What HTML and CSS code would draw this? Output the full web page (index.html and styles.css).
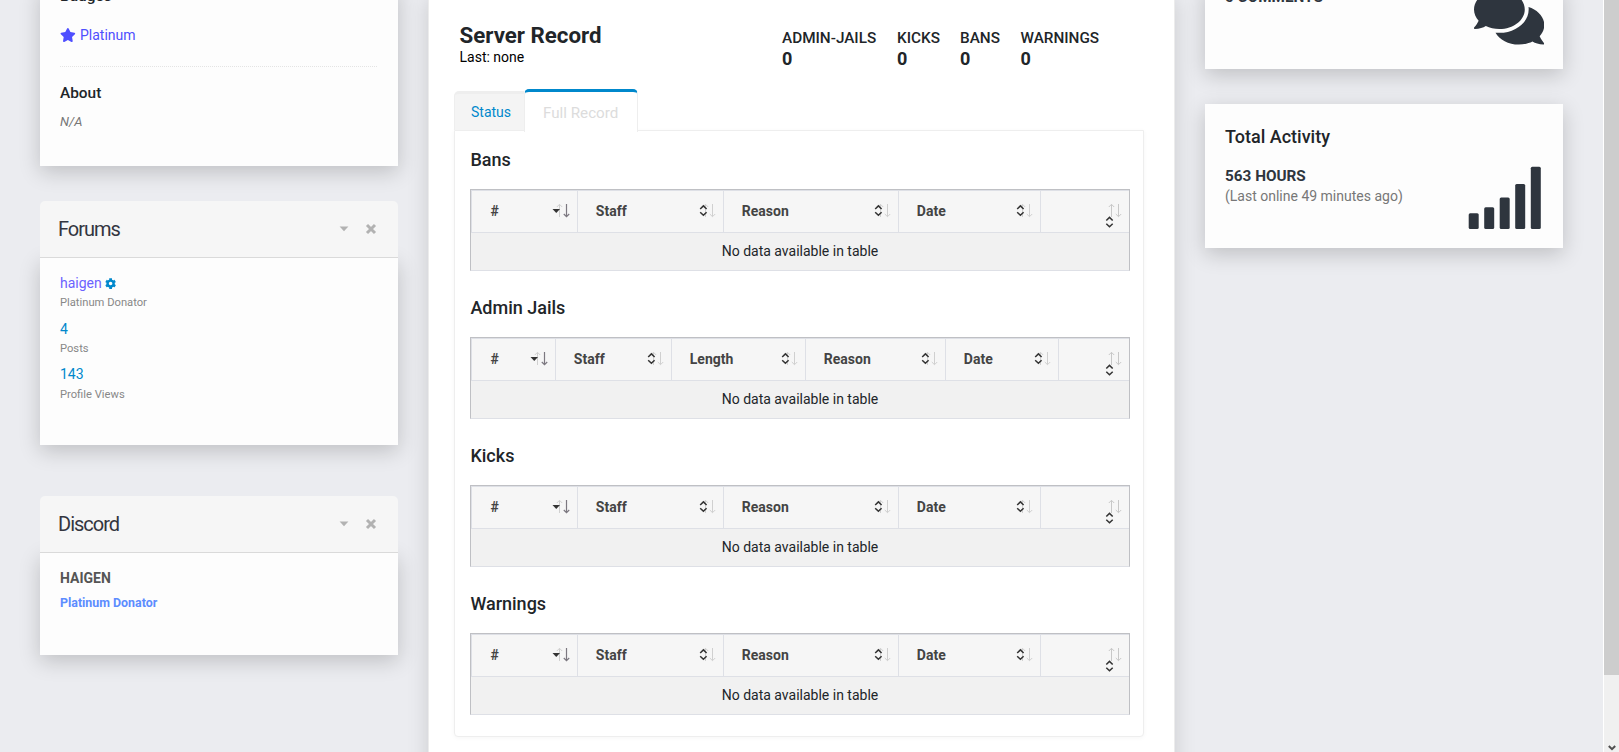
FILE: index.html
```
<!DOCTYPE html>
<html lang="en">
<head>
<meta charset="utf-8">
<title>User Profile</title>
<link rel="stylesheet" href="styles.css">
</head>
<body>
<svg class="defs" width="0" height="0">
  <symbol id="unsorted" viewBox="0 0 30 42">
    <path d="M12.500 14.500V27M9.800 17L12.500 14.300L15.200 17" fill="none" stroke="#d0d0d0"/>
    <path d="M19.500 14V26.500M16.800 24L19.500 26.700L22.200 24" fill="none" stroke="#d0d0d0"/>
    <path d="M7.200 19L10.400 15.900L13.600 19M7.200 22.200L10.400 25.300L13.600 22.200" fill="none" stroke="#333" stroke-width="1.500"/>
  </symbol>
  <symbol id="unsorted-wrapped" viewBox="0 0 30 42">
    <path d="M12.500 14.500V27M9.800 17L12.500 14.300L15.200 17" fill="none" stroke="#c8c8c8"/>
    <path d="M19.500 14V26.500M16.800 24L19.500 26.700L22.200 24" fill="none" stroke="#c8c8c8"/>
    <path d="M7.300 30.500L10.500 27.400L13.700 30.500M7.300 33.700L10.500 36.800L13.700 33.700" fill="none" stroke="#333" stroke-width="1.500"/>
  </symbol>
  <symbol id="sorted" viewBox="0 0 30 42">
    <path d="M12.500 14.500V27M9.800 17L12.500 14.300L15.200 17" fill="none" stroke="#d0d0d0"/>
    <path d="M19.500 14V26.500M16.800 24L19.500 26.700L22.200 24" fill="none" stroke="#7c7880" stroke-width="1.200"/>
    <path d="M5.500 19H13L9.250 23Z" fill="#333"/>
  </symbol>
  <symbol id="caret" viewBox="0 0 10 6"><path d="M.6.5H9.400L5 5.200Z" fill="#b2b2b2"/></symbol>
  <symbol id="close" viewBox="0 0 12 12"><path d="M2 2L10 10M10 2L2 10" stroke="#b2b2b2" stroke-width="3"/></symbol>
</svg>

<div class="page">
  <aside class="left">
    <section class="card profile">
      <h4 class="label">Badges</h4>
      <p class="badge">
        <svg class="star" viewBox="0 0 576 512"><path fill="currentColor" d="M259.300 17.800L194 150.200 47.900 171.500c-26.200 3.800-36.700 36.100-17.700 54.600l105.700 103-25 145.500c-4.500 26.300 23.200 46 46.400 33.700L288 439.600l130.700 68.700c23.200 12.200 50.900-7.400 46.400-33.700l-25-145.500 105.700-103c19-18.500 8.500-50.800-17.700-54.600L382 150.200 316.700 17.800c-11.700-23.600-45.600-23.900-57.400 0z"/></svg>
        <span>Platinum</span>
      </p>
      <hr class="dotted">
      <h4 class="label">About</h4>
      <p class="bio">N/A</p>
    </section>

    <section class="panel forums">
      <header class="panel-head">
        <h2>Forums</h2>
        <svg class="caret"><use href="#caret"/></svg>
        <svg class="close"><use href="#close"/></svg>
      </header>
      <div class="card panel-body stats">
        <p class="stat user">haigen
          <svg class="cog" viewBox="0 0 512 512"><path fill="#0088cc" d="M487.400 315.700l-42.600-24.600c4.300-23.200 4.300-47 0-70.200l42.600-24.600c4.900-2.800 7.100-8.600 5.500-14-11.100-35.600-30-67.800-54.700-94.600-3.800-4.100-10-5.100-14.800-2.300L380.800 110c-17.900-15.400-38.500-27.300-60.800-35.100V25.800c0-5.600-3.900-10.500-9.400-11.700-36.700-8.200-74.300-7.800-109.200 0-5.500 1.200-9.400 6.100-9.400 11.700V75c-22.200 7.900-42.800 19.800-60.800 35.100L88.700 85.500c-4.900-2.800-11-1.900-14.800 2.300-24.700 26.700-43.600 58.900-54.700 94.600-1.700 5.400.6 11.200 5.500 14L67.300 221c-4.300 23.200-4.300 47 0 70.200l-42.600 24.600c-4.900 2.800-7.100 8.600-5.500 14 11.100 35.600 30 67.800 54.700 94.600 3.800 4.100 10 5.100 14.800 2.300l42.600-24.600c17.900 15.400 38.500 27.300 60.800 35.100v49.200c0 5.600 3.900 10.500 9.400 11.700 36.700 8.200 74.300 7.800 109.200 0 5.500-1.200 9.400-6.100 9.400-11.700v-49.200c22.200-7.900 42.800-19.800 60.800-35.100l42.600 24.600c4.900 2.800 11 1.900 14.800-2.300 24.700-26.700 43.600-58.900 54.700-94.600 1.500-5.500-.7-11.300-5.600-14.100zM256 336c-44.100 0-80-35.900-80-80s35.900-80 80-80 80 35.900 80 80-35.900 80-80 80z"/></svg>
        </p>
        <p class="caption">Platinum Donator</p>
        <p class="stat">4</p>
        <p class="caption">Posts</p>
        <p class="stat views">143</p>
        <p class="caption">Profile Views</p>
      </div>
    </section>

    <section class="panel discord">
      <header class="panel-head">
        <h2>Discord</h2>
        <svg class="caret"><use href="#caret"/></svg>
        <svg class="close"><use href="#close"/></svg>
      </header>
      <div class="card panel-body">
        <p class="nick">HAIGEN</p>
        <p class="role">Platinum Donator</p>
      </div>
    </section>
  </aside>

  <main class="record">
    <header class="record-head">
      <div>
        <h1>Server Record</h1>
        <p class="last">Last: none</p>
      </div>
      <div class="totals">
        <div><h5>ADMIN-JAILS</h5><b>0</b></div>
        <div><h5>KICKS</h5><b>0</b></div>
        <div><h5>BANS</h5><b>0</b></div>
        <div><h5>WARNINGS</h5><b>0</b></div>
      </div>
    </header>

    <nav class="tabs">
      <a class="tab">Status</a>
      <a class="tab active">Full Record</a>
    </nav>

    <div class="tab-content">
      <h3>Bans</h3>
      <div class="table">
        <div class="row">
          <div class="th"><span>#</span><svg><use href="#sorted"/></svg></div>
          <div class="th"><span>Staff</span><svg><use href="#unsorted"/></svg></div>
          <div class="th"><span>Reason</span><svg><use href="#unsorted"/></svg></div>
          <div class="th"><span>Date</span><svg><use href="#unsorted"/></svg></div>
          <div class="th"><svg><use href="#unsorted-wrapped"/></svg></div>
        </div>
        <div class="empty">No data available in table</div>
      </div>

      <h3>Admin Jails</h3>
      <div class="table">
        <div class="row jails">
          <div class="th"><span>#</span><svg><use href="#sorted"/></svg></div>
          <div class="th"><span>Staff</span><svg><use href="#unsorted"/></svg></div>
          <div class="th"><span>Length</span><svg><use href="#unsorted"/></svg></div>
          <div class="th"><span>Reason</span><svg><use href="#unsorted"/></svg></div>
          <div class="th"><span>Date</span><svg><use href="#unsorted"/></svg></div>
          <div class="th"><svg><use href="#unsorted-wrapped"/></svg></div>
        </div>
        <div class="empty">No data available in table</div>
      </div>

      <h3>Kicks</h3>
      <div class="table">
        <div class="row">
          <div class="th"><span>#</span><svg><use href="#sorted"/></svg></div>
          <div class="th"><span>Staff</span><svg><use href="#unsorted"/></svg></div>
          <div class="th"><span>Reason</span><svg><use href="#unsorted"/></svg></div>
          <div class="th"><span>Date</span><svg><use href="#unsorted"/></svg></div>
          <div class="th"><svg><use href="#unsorted-wrapped"/></svg></div>
        </div>
        <div class="empty">No data available in table</div>
      </div>

      <h3>Warnings</h3>
      <div class="table">
        <div class="row">
          <div class="th"><span>#</span><svg><use href="#sorted"/></svg></div>
          <div class="th"><span>Staff</span><svg><use href="#unsorted"/></svg></div>
          <div class="th"><span>Reason</span><svg><use href="#unsorted"/></svg></div>
          <div class="th"><span>Date</span><svg><use href="#unsorted"/></svg></div>
          <div class="th"><svg><use href="#unsorted-wrapped"/></svg></div>
        </div>
        <div class="empty">No data available in table</div>
      </div>
    </div>
  </main>

  <aside class="right">
    <section class="card comments">
      <p class="figure">0 COMMENTS</p>
      <svg class="bubbles" viewBox="0 0 576 512"><path fill="#2e353e" d="M416 192c0-88.400-93.100-160-208-160S0 103.600 0 192c0 34.300 14.100 65.900 38 92-13.400 30.200-35.500 54.200-35.800 54.500-2.200 2.300-2.800 5.700-1.500 8.700S4.800 352 8 352c36.600 0 66.900-12.300 88.700-25 32.200 15.700 70.300 25 111.300 25 114.900 0 208-71.600 208-160zm122 220c23.900-26 38-57.700 38-92 0-66.900-53.500-124.200-129.300-148.100.9 6.600 1.300 13.300 1.300 20.100 0 105.900-107.700 192-240 192-10.800 0-21.300-.8-31.700-1.900C207.800 439.600 281.800 480 368 480c41 0 79.100-9.200 111.300-25 21.800 12.700 52.100 25 88.700 25 3.200 0 6.100-1.900 7.300-4.800 1.300-2.900.7-6.300-1.500-8.700-.3-.3-22.400-24.200-35.800-54.500z"/></svg>
    </section>

    <section class="card activity">
      <div>
        <h3>Total Activity</h3>
        <p class="figure">563 HOURS</p>
        <p class="online">(Last online 49 minutes ago)</p>
      </div>
      <svg class="bars" viewBox="0 0 74 64" fill="#2e353e">
        <rect x="0.700" y="47.300" width="10" height="15.700" rx="1.500"/>
        <rect x="16.200" y="41.300" width="10" height="21.700" rx="1.500"/>
        <rect x="31.700" y="31.500" width="10" height="31.500" rx="1.500"/>
        <rect x="47.200" y="18" width="10" height="45" rx="1.500"/>
        <rect x="62.800" y="0.700" width="10" height="62.300" rx="1.500"/>
      </svg>
    </section>
  </aside>

  <div class="scrollbar">
    <div class="thumb"></div>
    <svg class="arrow" viewBox="0 0 8 6"><path d="M.8 1L4 4.200L7.200 1" fill="none" stroke="#505050" stroke-width="2"/></svg>
  </div>
</div>
</body>
</html>
```
FILE: styles.css
```
* { box-sizing: border-box; }

html, body { height: 100%; }

body {
  margin: 0;
  overflow: hidden;
  background: #ebecf0;
  color: #212529;
  font: 14px/20px Roboto, "Open Sans", sans-serif;
}

h1, h2, h3, h4, h5, p { margin: 0; }
svg { display: block; flex: none; }
.defs { position: absolute; }

.page {
  display: flex;
  height: 752px;
  overflow: hidden;
  padding-left: 40px;
}

.card {
  background: #fdfdfd;
  box-shadow: 0 6px 20px rgba(0, 0, 0, .19);
}

/* left column */
.left { width: 358px; margin-right: 30px; }

.profile { height: 180px; margin-top: -14px; padding: 0 20px; }
.label { color: #212529; font-size: 15.4px; font-weight: 500; }
.badge {
  display: flex;
  align-items: center;
  gap: 4.250px;
  margin-top: 19px;
  color: #4f4fff;
}
.star { width: 15.750px; height: 14px; }
.dotted {
  height: 1px;
  margin: 21px 0 16px;
  border: 0;
  border-top: 1px dotted #e4e4e4;
  width: 317px;
}
.bio { margin-top: 9px; color: #777; font-size: 13px; font-style: italic; }

.forums { margin-top: 35px; }
.discord { margin-top: 51px; }
.panel-head {
  position: relative;
  z-index: 1;
  display: flex;
  align-items: center;
  height: 57px;
  padding: 0 18px 1px 18px;
  border-bottom: 1px solid #dadada;
  border-radius: 5px 5px 0 0;
  background: #f6f6f6;
}
.panel-head h2 {
  flex: 1;
  padding-top: 1px;
  color: #33353f;
  font-size: 20px;
  font-weight: 400;
  letter-spacing: -1px;
}
.caret { width: 10px; height: 6px; margin: 0 16px 0 0; }
.close { width: 12px; height: 12px; margin-right: 3px; }
.panel-body { padding: 15px 20px 0; }
.forums .panel-body { height: 187px; }
.discord .panel-body { height: 102px; }
.panel-body p { height: 20px; }
.stat { color: #0088cc; margin-top: 8px; }
.stat:first-child { margin-top: 0; }
.views { margin-top: 7px; }
.views + .caption { padding-top: 3px; }
.user { display: flex; align-items: center; gap: 3.500px; color: #6b62ff; }
.cog { width: 11.200px; height: 11.200px; margin-top: 1px; }
.caption { margin-top: -2px; padding-top: 2px; color: #888; font-size: 11.200px; }
.nick { color: #555; font-weight: 700; }
.role { margin-top: 5px; color: #5c8cff; font-size: 12.400px; font-weight: 700; }

/* centre panel */
.record {
  width: 747px;
  height: 800px;
  margin-right: 30px;
  padding: 0 30px 0 25px;
  border: solid #ececec;
  border-width: 0 1px;
  background: #fff;
  box-shadow: 0 0 20px rgba(0, 0, 0, .14);
}
.record-head {
  display: flex;
  justify-content: space-between;
  height: 69px;
  padding: 23px 0 0 5.500px;
}
h1 { font-size: 22.300px; font-weight: 700; line-height: 24px; }
.last { color: #000; }
.totals {
  display: grid;
  grid-template-columns: 115px 63px 60.500px 123.500px;
  padding-top: 5px;
}
h5 { font-size: 15.300px; font-weight: 500; margin-bottom: 1px; }
.totals b { display: block; font-size: 18px; }

.tabs { display: flex; align-items: flex-end; height: 61px; }
.tab {
  height: 39px;
  width: 70px;
  padding-left: 16px;
  border: 1px solid #eee;
  border-width: 3px 0 0 1px;
  border-radius: 5px 0 0 0;
  background: #f4f4f4;
  color: #0088cc;
  line-height: 36px;
}
.tab.active {
  z-index: 1;
  width: 114px;
  height: 43px;
  margin-bottom: -2px;
  padding-left: 18px;
  border: 1px solid #eee;
  border-width: 3px 1px 0;
  border-top-color: #0088cc;
  border-radius: 5px 5px 0 0;
  background: #fff;
  color: #dcdcdc;
  font-size: 15.200px;
  line-height: 42px;
}
.tab-content {
  width: 690px;
  height: 607px;
  padding: 19px 14px 0 15px;
  border: 1px solid #eee;
  border-radius: 0 0 4px 4px;
  background: #fff;
  box-shadow: 0 1px 5px rgba(0, 0, 0, .04);
}
h3 { font-size: 18px; font-weight: 500; }
.tab-content h3 { padding-left: .4px; }

.table {
  width: 660px;
  margin: 19px 0 27px;
  border: 1px solid #bfc0c4;
  border-bottom-color: #dee0e6;
}
.row {
  display: grid;
  grid-template-columns: 106px 146px 175px 142px 89px;
  height: 43px;
  border: solid #dee0e6;
  border-width: 1px 0;
  background: #f6f6f6;
}
.row.jails { grid-template-columns: 84px 116px 134px 140px 113px 71px; }
.th {
  display: flex;
  align-items: center;
  justify-content: space-between;
  padding-left: 17.800px;
  border-left: 1px solid #dee0e6;
  color: #444;
  font-weight: 700;
}
.th:first-child { padding-left: 18.600px; }
.th:last-child { justify-content: flex-end; }
.th span { padding-bottom: 2px; }
.th svg { width: 30px; height: 42px; margin: -1px 0 0; }
.empty { height: 37px; background: #f1f1f1; line-height: 37px; text-align: center; }

/* right column */
.right { width: 358px; margin-right: 40px; }
.right .card { display: flex; justify-content: space-between; padding: 0 20px; }
.comments { height: 83px; margin-top: -14px; }
.bubbles { width: 70.300px; height: 62.500px; margin: .4px -1px 0 0; }
.activity { height: 144px; margin-top: 35px; }
.activity h3 { margin-top: 23px; }
.activity .figure { margin-top: 19px; }
.figure { color: #2e353e; font-size: 15.300px; font-weight: 700; }
.comments .figure { padding-top: 1px; }
.online { color: #777; }
.bars { width: 74px; height: 64px; margin: 62px 1px 0 0; }

.scrollbar {
  display: flex;
  flex-direction: column;
  justify-content: space-between;
  width: 16px;
  border-left: 1px solid #fff;
  background: #f0f0f0;
}
.thumb { height: 675px; background: #cdcdcd; }
.arrow { width: 8px; height: 6px; margin: 0 0 1px 4px; }
```
